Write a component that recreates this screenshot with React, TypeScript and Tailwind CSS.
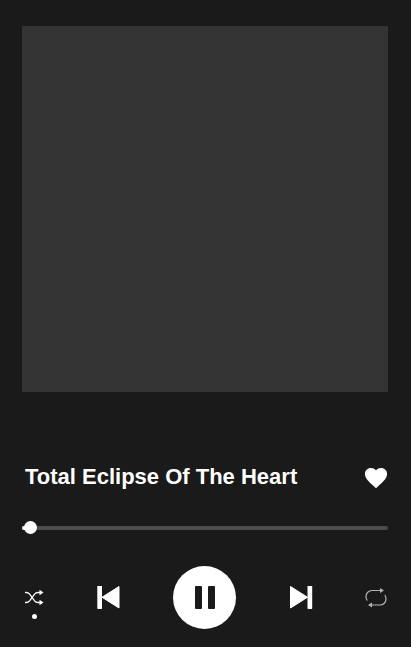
export default function App() {
  return (
    <div className="w-[411px] h-[647px] bg-[#1a1a1a] overflow-hidden pl-[22px] pr-[23px] pt-[26px] font-['Liberation_Sans',sans-serif] text-white">
      <div className="w-[366px] h-[366px] bg-[#333333]" />
      <div className="mt-[70px] h-[30px] flex items-center justify-between pl-[3px]">
        <div className="text-[22px] leading-[30px] font-bold">Total Eclipse Of The Heart</div>
        <button className="w-[24px] h-[24px] flex items-center justify-center">
          <svg viewBox="0 -1 24 24" className="w-[26px] h-[26px] shrink-0" fill="#fff">
            <path d="M12 21.300l-1.500-1.400C5.200 15.200 1.800 12.100 1.800 8.200 1.800 5.100 4.200 2.800 7.300 2.800c1.800 0 3.500.8 4.700 2.200 1.200-1.400 2.900-2.200 4.700-2.200 3.100 0 5.500 2.300 5.500 5.400 0 3.900-3.400 7-8.700 11.700z" />
          </svg>
        </button>
      </div>
      <div className="mt-[34px] relative h-[4px] rounded-full bg-[#4d4d4d]">
        <div className="absolute left-0 top-0 h-[4px] w-[8px] rounded-l-full bg-white" />
        <div className="absolute left-[2px] top-[-5px] w-[13px] h-[13px] rounded-full bg-white" />
      </div>
      <div className="mt-[36px] flex items-center h-[63px]">
        <button className="relative w-[24px] h-[24px] flex items-center justify-center">
          <svg viewBox="0 0 24 24" className="w-[24px] h-[24px]" fill="none" stroke="#fff" strokeWidth="1.300">
            <path d="M3 6.500h1.200c1.500 0 2.500.6 3.400 1.700l5 6.600c.9 1.100 1.900 1.700 3.400 1.700H19" />
            <path d="M3 16.500h1.200c1.500 0 2.500-.6 3.400-1.700l5-6.600c.9-1.100 1.900-1.700 3.400-1.700H19" />
            <path d="M17.500 3.800L21.500 6.500l-4 2.700z M17.500 13.800l4 2.700-4 2.700z" fill="#fff" stroke="none" />
          </svg>
          <span className="absolute left-[10px] top-[28.5px] w-[5px] h-[5px] rounded-full bg-white" />
        </button>
        <button className="ml-[50px] w-[24px] h-[24px] flex items-center justify-center">
          <svg viewBox="0 0 24 24" className="w-[24px] h-[24px]" fill="#fff">
            <path d="M2 -0.500h3.300a.7.7 0 0 1 .7.7v22.100a.7.7 0 0 1-.7.7H2a.7.7 0 0 1-.7-.7V.2a.7.7 0 0 1 .7-.7z" />
            <path d="M23 0.500v21.500L6 11.250z" stroke="#fff" strokeWidth="1" strokeLinejoin="round" />
          </svg>
        </button>
        <button className="ml-[53px] w-[63px] h-[63px] rounded-full bg-white flex items-center justify-center gap-[6px]">
          <span className="w-[7px] h-[23px] bg-[#1a1a1a] rounded-[1px]" />
          <span className="w-[7px] h-[23px] bg-[#1a1a1a] rounded-[1px]" />
        </button>
        <button className="ml-[53px] w-[24px] h-[24px] flex items-center justify-center">
          <svg viewBox="0 0 24 24" className="w-[24px] h-[24px]" fill="#fff">
            <path d="M19.200 -0.500h3.300a.7.7 0 0 1 .7.7v22.100a.7.7 0 0 1-.7.7h-3.300a.7.7 0 0 1-.7-.7V.2a.7.7 0 0 1 .7-.7z" />
            <path d="M1.500 0.500v21.500L18.500 11.250z" stroke="#fff" strokeWidth="1" strokeLinejoin="round" />
          </svg>
        </button>
        <button className="ml-[51px] w-[24px] h-[24px] flex items-center justify-center">
          <svg viewBox="0 0 24 24" className="w-[24px] h-[24px]" fill="none" stroke="#b3b3b3" strokeWidth="1.200">
            <path d="M3.300 14.500A6 6 0 0 1 2 11V10.500A6 6 0 0 1 8 4.500H19" />
            <path d="M20.700 9A6 6 0 0 1 22 12.500V13A6 6 0 0 1 16 19H5" />
            <path d="M16 2l4 2.500-4 2.500z M8 16.500l-4 2.500 4 2.500z" fill="#b3b3b3" stroke="none" />
          </svg>
        </button>
      </div>
    </div>
  );
}
